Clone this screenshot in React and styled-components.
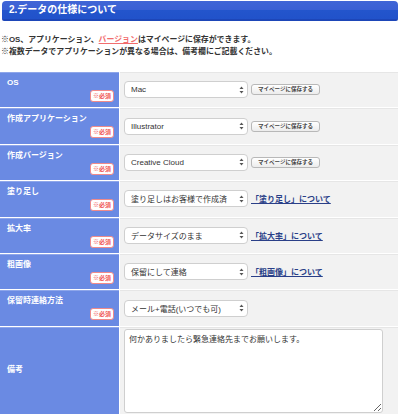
import React from "react";
import styled, { createGlobalStyle } from "styled-components";

const GlobalStyle = createGlobalStyle`
	html, body {
		margin: 0;
		padding: 0;
		background: #fff;
	}
	body {
		font-family: "Liberation Sans", "Noto Sans CJK JP", sans-serif;
		color: #333;
	}
`;

const rows = [
	{ label: "OS", value: "Mac", save: true },
	{ label: "作成アプリケーション", value: "Illustrator", save: true },
	{ label: "作成バージョン", value: "Creative Cloud", save: true },
	{ label: "塗り足し", value: "塗り足しはお客様で作成済", link: "「塗り足し」について" },
	{ label: "拡大率", value: "データサイズのまま", link: "「拡大率」について" },
	{ label: "粗画像", value: "保留にして連絡", link: "「粗画像」について" },
	{ label: "保留時連絡方法", value: "メール+電話(いつでも可)" },
];

export default function App() {
	return (
		<>
			<GlobalStyle />
			<Page>
				<Heading>2.データの仕様について</Heading>
				<Notes>
					<p>
						※OS、アプリケーション、<NoteLink>バージョン</NoteLink>はマイページに保存ができます。
					</p>
					<p>※複数データでアプリケーションが異なる場合は、備考欄にご記載ください。</p>
				</Notes>
				<Table>
					{rows.map((row) => (
						<Row key={row.label}>
							<Label>
								<LabelText>{row.label}</LabelText>
								<Required>※必須</Required>
							</Label>
							<Field>
								<SelectBox>
									<span>{row.value}</span>
									<Arrows>
										<svg width="5" height="8" viewBox="0 0 5 8">
											<path d="M2.5 0.5 L4.5 3 H0.5 Z" fill="#555" />
											<path d="M2.5 7.5 L4.5 5 H0.5 Z" fill="#555" />
										</svg>
									</Arrows>
								</SelectBox>
								{row.save && <SaveButton>マイページに保存する</SaveButton>}
								{row.link && <InfoLink href="#">{row.link}</InfoLink>}
							</Field>
						</Row>
					))}
					<Row $tall>
						<Label $center>
							<LabelText>備考</LabelText>
						</Label>
						<Field $top>
							<Memo defaultValue="何かありましたら緊急連絡先までお願いします。" />
						</Field>
					</Row>
				</Table>
			</Page>
		</>
	);
}

const Page = styled.div`
	width: 400px;
	padding-top: 1px;
`;

const Heading = styled.h2`
	margin: 0 2px 0 2px;
	height: 18px;
	padding-left: 7px;
	font-size: 10px;
	line-height: 18px;
	font-weight: 700;
	color: #fff;
	border-radius: 4px 4px 2px 2px;
	background: linear-gradient(#4065d6 0%, #3a60d4 50%, #2355cc 51%, #2152ca 100%);
	border-bottom: 2px solid #1d46b8;
`;

const Notes = styled.div`
	margin-top: 13px;
	padding-left: 1px;
	font-size: 7.9px;
	font-weight: 700;
	color: #333;

	p {
		margin: 0;
		line-height: 12px;
	}
`;

const NoteLink = styled.span`
	color: #f26d6d;
	text-decoration: underline;
`;

const Table = styled.div`
	margin-top: 13px;
	width: 398px;
`;

const Row = styled.div`
	display: grid;
	grid-template-columns: 119px 1fr;
	column-gap: 1px;
	height: ${(p) => (p.$tall ? "87px" : "35.4px")};
	border-top: 1px solid #fff;
	background: #fff;
`;

const Label = styled.div`
	position: relative;
	background: #6a8ae3;
	box-shadow: inset 0 1px 0 #8ea6ea;
	color: #fff;
	padding-left: 7px;
	display: flex;
	align-items: ${(p) => (p.$center ? "center" : "flex-start")};
	padding-top: ${(p) => (p.$center ? "0" : "5px")};
`;

const LabelText = styled.span`
	font-size: 8px;
	font-weight: 700;
	line-height: 12px;
`;

const Required = styled.span`
	position: absolute;
	right: 5px;
	top: 18px;
	width: 22px;
	height: 10px;
	border: 1px solid #f08a8a;
	border-radius: 3px;
	background: #fff;
	color: #f05656;
	font-size: 6px;
	font-weight: 700;
	line-height: 10px;
	text-align: center;
`;

const Field = styled.div`
	background: #f2f2f2;
	box-shadow: inset 0 1px 0 #e6e6e6;
	display: flex;
	align-items: ${(p) => (p.$top ? "stretch" : "center")};
	gap: 3px;
	padding: ${(p) => (p.$top ? "2px 13px 1px 4px" : "0 0 0 4px")};
`;

const SelectBox = styled.div`
	width: 124px;
	height: 17px;
	box-sizing: border-box;
	border: 1px solid #cfcfcf;
	border-radius: 4px;
	background: #fff;
	display: flex;
	align-items: center;
	justify-content: space-between;
	padding: 0 3px 0 6px;
	font-size: 8px;
	color: #333;
	white-space: nowrap;
	overflow: hidden;
`;

const Arrows = styled.span`
	display: flex;
	align-items: center;
`;

const SaveButton = styled.button`
	height: 11px;
	width: 69px;
	padding: 0;
	border: 1px solid #b8b8b8;
	border-radius: 3px;
	background: linear-gradient(#ffffff, #ececec);
	font-family: inherit;
	font-size: 5.5px;
	font-weight: 700;
	color: #444;
	line-height: 9px;
	white-space: nowrap;
`;

const InfoLink = styled.a`
	font-size: 8px;
	font-weight: 700;
	color: #2a3f88;
	text-decoration: underline;
	white-space: nowrap;
`;

const Memo = styled.textarea`
	width: 259px;
	box-sizing: border-box;
	border: 1px solid #cfcfcf;
	border-radius: 3px;
	padding: 3px 4px;
	font-family: inherit;
	font-size: 8px;
	color: #333;
	resize: both;
	background: #fff;
`;
